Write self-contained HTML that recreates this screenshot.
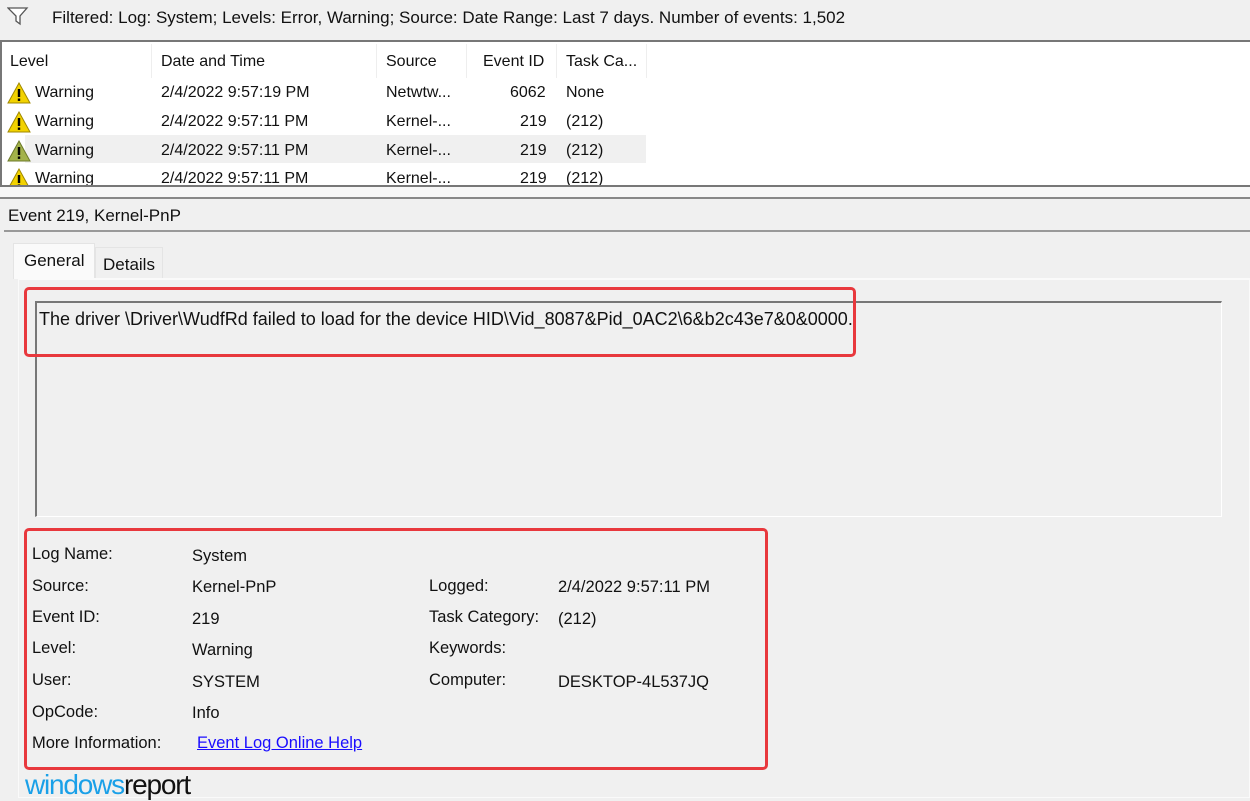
<!DOCTYPE html>
<html><head><meta charset="utf-8"><style>
*{margin:0;padding:0;box-sizing:border-box}
body{width:1250px;height:800px;background:#f0f0f0;font-family:"Liberation Sans",sans-serif;font-size:16px;color:#111;position:relative;overflow:hidden}
.a{position:absolute;white-space:nowrap}
.red{position:absolute;border:3px solid #e8383d;border-radius:5px}
</style></head><body>
<svg class="a" style="left:7px;top:6px" width="22" height="20" viewBox="0 0 22 20"><path d="M1 2H20L13 10V18L9 15V10Z" fill="#fff" stroke="#555" stroke-width="1.3"/></svg>
<div class="a" style="left:52px;top:8px;font-size:17px">Filtered: Log: System; Levels: Error, Warning; Source: Date Range: Last 7 days. Number of events: 1,502</div>
<div class="a" style="left:0;top:40px;width:1250px;height:2px;background:#777"></div>
<div class="a" style="left:0;top:42px;width:1250px;height:143px;background:#fff;border-left:2px solid #777"></div>
<div class="a" style="left:151px;top:44px;width:1px;height:34px;background:#eee"></div>
<div class="a" style="left:376px;top:44px;width:1px;height:34px;background:#eee"></div>
<div class="a" style="left:466px;top:44px;width:1px;height:34px;background:#eee"></div>
<div class="a" style="left:556px;top:44px;width:1px;height:34px;background:#eee"></div>
<div class="a" style="left:646px;top:44px;width:1px;height:34px;background:#eee"></div>
<div class="a" style="left:25px;top:135px;width:621px;height:28px;background:#f0f0f0"></div>
<div class="a" style="left:10px;top:53px">Level</div>
<div class="a" style="left:161px;top:53px">Date and Time</div>
<div class="a" style="left:386px;top:53px">Source</div>
<div class="a" style="left:483px;top:53px">Event ID</div>
<div class="a" style="left:566px;top:53px">Task Ca...</div>
<div style="position:absolute;left:0;top:78px;width:660px;height:107px;overflow:hidden">
<div class="a" style="left:0;top:0">
<svg class="a" style="left:7px;top:4px" width="24" height="22" viewBox="0 0 24 22"><path d="M12 1L23 21H1Z" fill="#f2d200" stroke="#a08800"/><rect x="10.8" y="7" width="2.4" height="8" fill="#000"/><rect x="10.8" y="16.5" width="2.4" height="2.4" fill="#000"/></svg>
<div class="a" style="left:35px;top:6px">Warning</div><div class="a" style="left:161px;top:6px">2/4/2022 9:57:19 PM</div><div class="a" style="left:386px;top:6px">Netwtw...</div><div class="a" style="left:510px;top:6px">6062</div><div class="a" style="left:566px;top:6px">None</div>
</div>
<div class="a" style="left:0;top:28px">
<svg class="a" style="left:7px;top:5px" width="24" height="22" viewBox="0 0 24 22"><path d="M12 1L23 21H1Z" fill="#f2d200" stroke="#a08800"/><rect x="10.8" y="7" width="2.4" height="8" fill="#000"/><rect x="10.8" y="16.5" width="2.4" height="2.4" fill="#000"/></svg>
<div class="a" style="left:35px;top:7px">Warning</div><div class="a" style="left:161px;top:7px">2/4/2022 9:57:11 PM</div><div class="a" style="left:386px;top:7px">Kernel-...</div><div class="a" style="left:520px;top:7px">219</div><div class="a" style="left:566px;top:7px">(212)</div>
</div>
<div class="a" style="left:0;top:57px">
<svg class="a" style="left:7px;top:5px" width="24" height="22" viewBox="0 0 24 22"><path d="M12 1L23 21H1Z" fill="#a3b24a" stroke="#6d7a2a"/><rect x="10.8" y="7" width="2.4" height="8" fill="#000"/><rect x="10.8" y="16.5" width="2.4" height="2.4" fill="#000"/></svg>
<div class="a" style="left:35px;top:7px">Warning</div><div class="a" style="left:161px;top:7px">2/4/2022 9:57:11 PM</div><div class="a" style="left:386px;top:7px">Kernel-...</div><div class="a" style="left:520px;top:7px">219</div><div class="a" style="left:566px;top:7px">(212)</div>
</div>
<div class="a" style="left:0;top:85px">
<svg class="a" style="left:7px;top:5px" width="24" height="22" viewBox="0 0 24 22"><path d="M12 1L23 21H1Z" fill="#f2d200" stroke="#a08800"/><rect x="10.8" y="7" width="2.4" height="8" fill="#000"/><rect x="10.8" y="16.5" width="2.4" height="2.4" fill="#000"/></svg>
<div class="a" style="left:35px;top:7px">Warning</div><div class="a" style="left:161px;top:7px">2/4/2022 9:57:11 PM</div><div class="a" style="left:386px;top:7px">Kernel-...</div><div class="a" style="left:520px;top:7px">219</div><div class="a" style="left:566px;top:7px">(212)</div>
</div>
</div>
<div class="a" style="left:0;top:185px;width:1250px;height:2px;background:#777"></div>
<div class="a" style="left:0;top:187px;width:1250px;height:10px;background:#f7f7f7"></div>
<div class="a" style="left:0;top:197px;width:1250px;height:2px;background:#888"></div>
<div class="a" style="left:8px;top:206px;font-size:17px">Event 219, Kernel-PnP</div>
<div class="a" style="left:4px;top:230px;width:1246px;height:2px;background:#999"></div>
<div class="a" style="left:13px;top:243px;width:82px;height:36px;background:#fafafa;border:1px solid #e4e4e4;border-bottom:none"></div>
<div class="a" style="left:24px;top:251px;font-size:17px">General</div>
<div class="a" style="left:95px;top:247px;width:68px;height:31px;background:#f0f0f0;border:1px solid #e4e4e4;border-bottom:none"></div>
<div class="a" style="left:103px;top:255px;font-size:17px">Details</div>
<div class="a" style="left:18px;top:278px;width:1232px;height:520px;border:1px solid #fafafa;border-top:2px solid #fafafa"></div>
<div class="a" style="left:35px;top:301px;width:1187px;height:216px;border-top:2px solid #777;border-left:2px solid #777;border-right:1px solid #fff;border-bottom:1px solid #fff"></div>
<div class="a" style="left:39px;top:309px;font-size:18px">The driver \Driver\WudfRd failed to load for the device HID\Vid_8087&amp;Pid_0AC2\6&amp;b2c43e7&amp;0&amp;0000.</div>
<div class="red" style="left:24px;top:287px;width:832px;height:70px"></div>
<div style="position:absolute;left:0;top:1px;font-size:16.5px">
<div class="a" style="left:32px;top:544px">Log Name:</div><div class="a" style="left:192px;top:546px">System</div>
<div class="a" style="left:32px;top:576px">Source:</div><div class="a" style="left:192px;top:577px">Kernel-PnP</div>
<div class="a" style="left:429px;top:576px">Logged:</div><div class="a" style="left:558px;top:577px">2/4/2022 9:57:11 PM</div>
<div class="a" style="left:32px;top:607px">Event ID:</div><div class="a" style="left:192px;top:609px">219</div>
<div class="a" style="left:429px;top:607px">Task Category:</div><div class="a" style="left:558px;top:609px">(212)</div>
<div class="a" style="left:32px;top:638px">Level:</div><div class="a" style="left:192px;top:640px">Warning</div>
<div class="a" style="left:429px;top:638px">Keywords:</div>
<div class="a" style="left:32px;top:670px">User:</div><div class="a" style="left:192px;top:672px">SYSTEM</div>
<div class="a" style="left:429px;top:670px">Computer:</div><div class="a" style="left:558px;top:672px">DESKTOP-4L537JQ</div>
<div class="a" style="left:32px;top:702px">OpCode:</div><div class="a" style="left:192px;top:703px">Info</div>
<div class="a" style="left:32px;top:733px">More Information:</div><div class="a" style="left:197px;top:733px;color:#1a0dff;text-decoration:underline">Event Log Online Help</div>
</div>
<div class="red" style="left:24px;top:528px;width:744px;height:242px"></div>
<div class="a" style="left:25px;top:769px;font-size:28px;letter-spacing:-1.2px;line-height:32px"><span style="color:#1aa0e8">windows</span><span style="color:#111">report</span></div>
</body></html>
